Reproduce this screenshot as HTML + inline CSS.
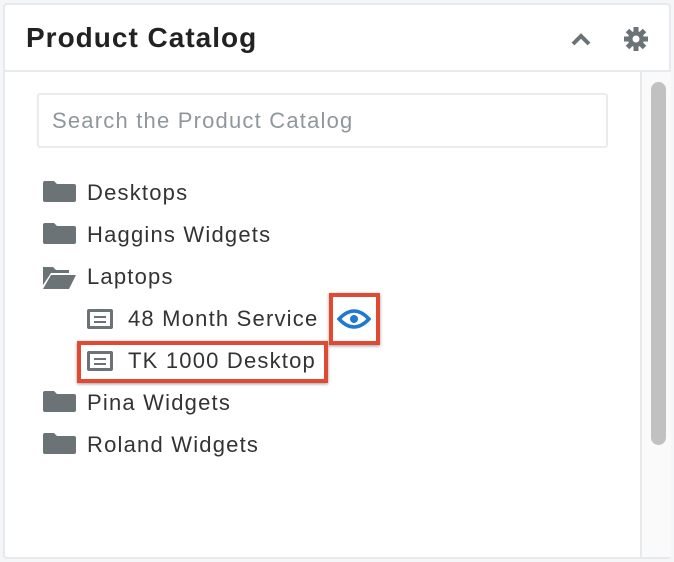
<!DOCTYPE html>
<html><head><style>
*{margin:0;padding:0;box-sizing:border-box}
body{width:674px;height:562px;background:#f4f6f7;font-family:"Liberation Sans",sans-serif;position:relative;overflow:hidden}
.panel{position:absolute;left:3px;top:3px;width:668px;height:556px;background:#fff;border:2px solid #e6eaec;border-radius:4px}
.hdr{position:absolute;left:0;top:0;right:0;height:67px;border-bottom:2px solid #e6eaec}
.title{position:absolute;left:21px;top:17px;font-size:28px;font-weight:bold;color:#222;letter-spacing:1px}
.search{position:absolute;left:32px;top:88px;width:571px;height:55px;border:2px solid #e8ecee;border-radius:3px;font-size:22px;color:#8f979c;padding:13px 0 0 13px;letter-spacing:1.2px}
.track{position:absolute;left:635px;top:67px;width:31px;bottom:0;background:#fafafa;border-left:2px solid #e6eaec}
.thumb{position:absolute;left:9px;top:10px;width:15px;height:363px;background:#c1c1c1;border-radius:8px}
.row{position:absolute;font-size:22px;color:#333;line-height:26px;letter-spacing:1.2px}
.fold{position:absolute;width:33px;height:21px}
.doc{position:absolute;width:26px;height:20px;border:3px solid #6b7376;border-radius:2px;background:#fff}
.doc:before,.doc:after{content:"";position:absolute;left:4px;right:4px;height:2px;background:#6b7376}
.doc:before{top:4px}.doc:after{top:9px}
.box{position:absolute;border:4px solid #e04a33;box-shadow:0 1px 3px rgba(0,0,0,.4)}
</style></head><body>
<div class="panel">
 <div class="hdr">
  <div class="title">Product Catalog</div>
  <svg style="position:absolute;left:565px;top:28px" width="22" height="14"><path d="M3 11 L11 3 L19 11" stroke="#6b7376" stroke-width="4" fill="none"/></svg>
  <svg style="position:absolute;left:619px;top:22px" width="24" height="24" viewBox="0 0 24 24"><g fill="#6b7376"><circle cx="12" cy="12" r="8"/><rect x="9.5" y="0" width="5" height="24"/><rect x="0" y="9.5" width="24" height="5"/><rect x="9.5" y="0" width="5" height="24" transform="rotate(45 12 12)"/><rect x="9.5" y="0" width="5" height="24" transform="rotate(-45 12 12)"/></g><circle cx="12" cy="12" r="3.5" fill="#fff"/></svg>
 </div>
 <div class="search">Search the Product Catalog</div>
 <div class="track"><div class="thumb"></div></div>
</div>
<svg class="fold" style="left:43px;top:181px" viewBox="0 0 33 21"><path d="M0 2 Q0 0 2 0 H11 L14 3 H31 Q33 3 33 5 V19 Q33 21 31 21 H2 Q0 21 0 19Z" fill="#6b7376"/></svg>
<div class="row" style="left:87px;top:180px">Desktops</div>
<svg class="fold" style="left:43px;top:223px" viewBox="0 0 33 21"><path d="M0 2 Q0 0 2 0 H11 L14 3 H31 Q33 3 33 5 V19 Q33 21 31 21 H2 Q0 21 0 19Z" fill="#6b7376"/></svg>
<div class="row" style="left:87px;top:222px">Haggins Widgets</div>
<svg class="fold" style="left:43px;top:265px;height:24px" viewBox="0 0 33 24"><path d="M0 2 H10 L13 5 H26 V8 H8 L0 20Z" fill="#6b7376"/><path d="M8 10 H33 L26 24 H0Z" fill="#6b7376"/></svg>
<div class="row" style="left:87px;top:264px">Laptops</div>
<div class="doc" style="left:87px;top:309px"></div>
<div class="row" style="left:128px;top:306px">48 Month Service</div>
<div class="doc" style="left:87px;top:351px"></div>
<div class="row" style="left:128px;top:348px">TK 1000 Desktop</div>
<div class="box" style="left:329px;top:293px;width:51px;height:52px"></div>
<svg style="position:absolute;left:337px;top:308px" width="34" height="22" viewBox="0 0 34 22"><path d="M2 11 Q17 -5 32 11 Q17 27 2 11Z" fill="none" stroke="#1f78d1" stroke-width="3.5"/><circle cx="17" cy="11" r="4" fill="#1f78d1"/></svg>
<div class="box" style="left:77px;top:341px;width:251px;height:42px"></div>
<svg class="fold" style="left:43px;top:391px" viewBox="0 0 33 21"><path d="M0 2 Q0 0 2 0 H11 L14 3 H31 Q33 3 33 5 V19 Q33 21 31 21 H2 Q0 21 0 19Z" fill="#6b7376"/></svg>
<div class="row" style="left:87px;top:390px">Pina Widgets</div>
<svg class="fold" style="left:43px;top:433px" viewBox="0 0 33 21"><path d="M0 2 Q0 0 2 0 H11 L14 3 H31 Q33 3 33 5 V19 Q33 21 31 21 H2 Q0 21 0 19Z" fill="#6b7376"/></svg>
<div class="row" style="left:87px;top:432px">Roland Widgets</div>
</body></html>
